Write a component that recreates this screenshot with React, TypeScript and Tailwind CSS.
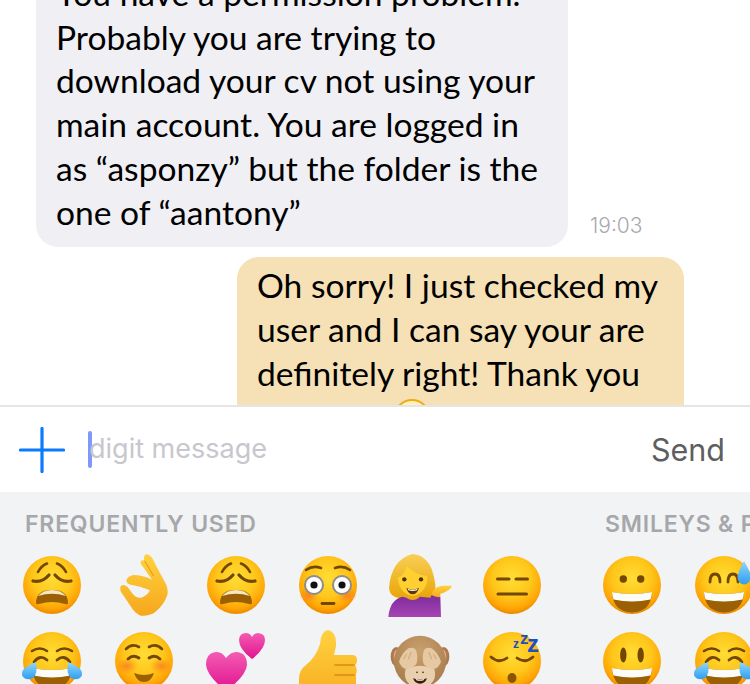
import React from 'react';

const BROWN = '#744700';

const Defs = () => (
  <svg className="absolute w-0 h-0" aria-hidden="true">
    <defs>
      <radialGradient id="face" cx="50%" cy="38%" r="62%">
        <stop offset="0%" stopColor="#ffdd35" />
        <stop offset="55%" stopColor="#ffc61a" />
        <stop offset="85%" stopColor="#ffa505" />
        <stop offset="100%" stopColor="#ea8900" />
      </radialGradient>
      <linearGradient id="skin" x1="0" y1="0" x2="0" y2="1">
        <stop offset="0%" stopColor="#ffd23f" />
        <stop offset="100%" stopColor="#f6a71c" />
      </linearGradient>
      <linearGradient id="pink" x1="0" y1="0" x2="0" y2="1">
        <stop offset="0%" stopColor="#f45bb3" />
        <stop offset="100%" stopColor="#e0138f" />
      </linearGradient>
      <linearGradient id="tear" x1="0" y1="0" x2="0" y2="1">
        <stop offset="0%" stopColor="#8fd8fb" />
        <stop offset="100%" stopColor="#2f9df0" />
      </linearGradient>
      <linearGradient id="hair" x1="0" y1="0" x2="0" y2="1">
        <stop offset="0%" stopColor="#f8cf55" />
        <stop offset="100%" stopColor="#e9a406" />
      </linearGradient>
      <linearGradient id="sweater" x1="0" y1="0" x2="0" y2="1">
        <stop offset="0%" stopColor="#7d2c99" />
        <stop offset="100%" stopColor="#a643b5" />
      </linearGradient>
      <radialGradient id="fur" cx="50%" cy="30%" r="70%">
        <stop offset="0%" stopColor="#c9a06d" />
        <stop offset="100%" stopColor="#a87c4c" />
      </radialGradient>
      <radialGradient id="blush" cx="50%" cy="50%" r="50%">
        <stop offset="0%" stopColor="#f9761f" stopOpacity="0.75" />
        <stop offset="100%" stopColor="#f9761f" stopOpacity="0" />
      </radialGradient>
    </defs>
  </svg>
);

const Icon = ({ children, vb = '0 0 64 64', size = 64 }: { children: React.ReactNode; vb?: string; size?: number }) => (
  <svg width={size} height={size} viewBox={vb} className="overflow-visible">
    {children}
  </svg>
);

const Head = () => <circle cx="32" cy="32" r="29" fill="url(#face)" />;

const Line = ({ d, w = 2.6, c = BROWN }: { d: string; w?: number; c?: string }) => (
  <path d={d} fill="none" stroke={c} strokeWidth={w} strokeLinecap="round" />
);

// wide open smile shared by most of the faces
const BigSmile = () => (
  <g>
    <path d="M12 39 Q32 43 52 39 Q51 59 32 59.5 Q13 59 12 39Z" fill="#9a6003" />
    <path d="M12 39 Q32 43 52 39 Q51.8 43 50.5 46.5 Q32 50.5 13.5 46.5 Q12.2 43 12 39Z" fill="#fbfbf8" />
  </g>
);

const TearDrop = ({ x, y, flip = false }: { x: number; y: number; flip?: boolean }) => (
  <g transform={`translate(${x} ${y}) scale(${flip ? -1 : 1} 1)`}>
    <path d="M7 -9 Q9 3 4 7 Q-2 10 -6 6 Q-9 1 -4 -3 Q2 -7 7 -9Z" fill="url(#tear)" />
  </g>
);

const Weary = () => (
  <Icon>
    <Head />
    <Line d="M18 19 Q21 13 27 10.5" />
    <Line d="M46 19 Q43 13 37 10.5" />
    <Line d="M13 28 Q22 30 29 22" w={3.2} />
    <Line d="M51 28 Q42 30 35 22" w={3.2} />
    <path d="M16 50 Q16 37 32 37 Q48 37 48 50 Q48 52 45 51 Q32 47 19 51 Q16 52 16 50Z" fill="#9a6003" />
    <path d="M18 43 Q23 37 32 37 Q41 37 46 43 Q32 38.5 18 43Z" fill="#f6e6c2" />
  </Icon>
);

const OkHand = () => (
  <Icon vb="36 24 192 192">
    <path
      d="M138 28 Q154 26 167 60 L195 112 Q206 130 202 150 Q192 180 165 202 Q148 214 122 212 Q104 205 92 184 L72 154 Q56 136 62 124 Q70 116 82 125 L98 146 Q108 160 124 158 Q142 152 150 136 Q128 126 100 121 Q80 118 79 108 Q80 95 100 90 Q128 90 156 104 L132 70 L122 56 Q120 46 130 46 L134 48 Q128 34 138 28Z"
      fill="url(#skin)"
    />
    <Line d="M134 48 L160 92" w={2.5} c="#d98a10" />
  </Icon>
);

const Flushed = () => (
  <Icon>
    <Head />
    <ellipse cx="13" cy="42" rx="10" ry="8" fill="url(#blush)" />
    <ellipse cx="51" cy="42" rx="10" ry="8" fill="url(#blush)" />
    <circle cx="18" cy="32" r="9" fill="#fff" stroke="#8d8d8d" strokeWidth="2" />
    <circle cx="46" cy="32" r="9" fill="#fff" stroke="#8d8d8d" strokeWidth="2" />
    <circle cx="18" cy="32" r="3.6" fill="#111" />
    <circle cx="46" cy="32" r="3.6" fill="#111" />
    <Line d="M10 17 Q17 12 25 15" />
    <Line d="M54 17 Q47 12 39 15" />
    <Line d="M26 50.5 L38 50.5" w={2.8} />
  </Icon>
);

const Person = () => (
  <Icon vb="39 24 192 192">
    <path d="M112 27 Q152 30 170 72 Q186 118 180 156 Q150 170 130 158 L76 160 Q44 158 42 130 Q48 45 112 27Z" fill="url(#hair)" />
    <path d="M40 216 Q44 165 82 155 L112 162 L136 155 L166 158 L170 150 L196 155 L198 216Z" fill="url(#sweater)" />
    <path d="M92 132 L134 132 L132 158 Q113 172 94 158Z" fill="#eba615" />
    <path d="M68 98 Q88 92 96 62 Q118 88 157 94 Q160 120 140 140 Q113 164 86 140 Q70 124 68 98Z" fill="#ffd02f" />
    <circle cx="88" cy="103" r="6.5" fill="#4d3210" />
    <circle cx="138" cy="103" r="6.5" fill="#4d3210" />
    <path d="M94 129 Q113 137 132 129 Q126 148 113 148 Q100 148 94 129Z" fill="#5f3608" />
    <path d="M98 131 Q113 136 128 131 L126 136 Q113 140 100 136Z" fill="#fff" />
    <path d="M170 150 Q172 128 200 122 L231 122 Q226 138 196 146 L196 156 Q182 158 170 150Z" fill="url(#skin)" />
  </Icon>
);

const Expressionless = () => (
  <Icon>
    <Head />
    <Line d="M17.5 26 L29 26" w={3} />
    <Line d="M36 26 L47.5 26" w={3} />
    <Line d="M18 41 L46.5 41" w={3} />
  </Icon>
);

const Grinning = () => (
  <Icon>
    <Head />
    <circle cx="23.3" cy="26" r="3.7" fill={BROWN} />
    <circle cx="40.7" cy="26" r="3.7" fill={BROWN} />
    <BigSmile />
  </Icon>
);

const SweatSmile = () => (
  <Icon>
    <Head />
    <Line d="M18 29 Q18 21 23 21 Q28 21 28 29" w={2.8} />
    <Line d="M36 29 Q36 21 41 21 Q46 21 46 29" w={2.8} />
    <BigSmile />
    <path d="M52 8 Q59 20 58.5 24 Q58 31 52 31.5 Q46 31 45.5 24 Q45.5 20 52 8Z" fill="url(#tear)" />
  </Icon>
);

const Joy = () => (
  <Icon>
    <Head />
    <Line d="M12 22 Q20 17 27 22" />
    <Line d="M52 22 Q44 17 37 22" />
    <Line d="M14 33 Q20 25 27 31" w={2.8} />
    <Line d="M50 33 Q44 25 37 31" w={2.8} />
    <BigSmile />
    <TearDrop x={9} y={42} />
    <TearDrop x={55} y={42} flip />
  </Icon>
);

const Relaxed = () => (
  <Icon>
    <Head />
    <ellipse cx="15" cy="37" rx="11" ry="8" fill="url(#blush)" />
    <ellipse cx="49" cy="37" rx="11" ry="8" fill="url(#blush)" />
    <Line d="M14 20 Q20 14 27 18" />
    <Line d="M50 20 Q44 14 37 18" />
    <Line d="M16 30 Q21 25 27 29" w={2.8} />
    <Line d="M48 30 Q43 25 37 29" w={2.8} />
    <path d="M22 44 Q32 48 42 44 Q39 53 32 53 Q25 53 22 44Z" fill="#9a6003" />
  </Icon>
);

const Hearts = () => (
  <Icon>
    <path d="M22 62 Q3 47 2 36 Q2 24 12 23 Q18 22.5 22 29 Q27 22.5 33 23 Q43 24 43 36 Q42 47 22 62Z" fill="url(#pink)" />
    <path d="M48 30 Q35 20 35 11 Q35.5 4 42 4 Q46 4 48 8 Q50.5 4 54 4 Q61 4.5 61 11 Q61 20 48 30Z" fill="url(#pink)" />
  </Icon>
);

const ThumbsUp = () => (
  <Icon>
    <path d="M3 50 Q3 41 10 36 Q20 28 24 15 Q25 2 32 1 Q41 3 40 17 L38 26 L56 26 Q61 26 61 31 Q61 35 59 36 Q62 40 60 45 L60 80 L3 80Z" fill="url(#skin)" />
    <Line d="M39 36 L58 36" w={1.6} c="#d98a10" />
    <Line d="M39 46 L58 46" w={1.6} c="#d98a10" />
    <Line d="M39 56 L58 56" w={1.6} c="#d98a10" />
  </Icon>
);

const Monkey = () => (
  <Icon vb="39 252 192 192">
    <ellipse cx="64" cy="335" rx="17" ry="29" fill="#a87c4c" />
    <ellipse cx="206" cy="335" rx="17" ry="29" fill="#a87c4c" />
    <ellipse cx="66" cy="335" rx="10" ry="21" fill="#eba6a0" />
    <ellipse cx="204" cy="335" rx="10" ry="21" fill="#eba6a0" />
    <circle cx="135" cy="350" r="78" fill="url(#fur)" />
    <path d="M92 372 Q135 352 178 372 Q190 420 135 430 Q80 420 92 372Z" fill="#e8cfae" />
    <path d="M114 400 Q135 407 156 400 Q150 416 135 416 Q120 416 114 400Z" fill="#3a1a0a" />
    <path d="M122 402 Q135 406 148 402 L146 406 Q135 409 124 406Z" fill="#fff" />
    <ellipse cx="126" cy="382" rx="3" ry="2.5" fill="#5b3a1c" />
    <ellipse cx="144" cy="382" rx="3" ry="2.5" fill="#5b3a1c" />
    <path d="M72 350 Q80 325 100 310 Q118 304 124 318 Q130 340 124 358 Q108 372 94 372 Q78 368 72 350Z" fill="#e6c8a3" />
    <path d="M198 350 Q190 325 170 310 Q152 304 146 318 Q140 340 146 358 Q162 372 176 372 Q192 368 198 350Z" fill="#e6c8a3" />
    <Line d="M94 328 L86 342" w={2} c="#b99465" />
    <Line d="M108 322 L100 342" w={2} c="#b99465" />
    <Line d="M176 328 L184 342" w={2} c="#b99465" />
    <Line d="M162 322 L170 342" w={2} c="#b99465" />
  </Icon>
);

const Sleeping = () => (
  <Icon>
    <Head />
    <Line d="M11 28 Q19 35 27 29" w={2.8} />
    <Line d="M53 28 Q45 35 37 29" w={2.8} />
    <ellipse cx="32" cy="49" rx="4.5" ry="5" fill="#8a5503" />
    <g fill="#1c4fc4" fontFamily='"Liberation Sans", sans-serif' fontWeight="700">
      <text x="33" y="19" fontSize="12">z</text>
      <text x="40" y="15" fontSize="17">z</text>
      <text x="47" y="23" fontSize="24">z</text>
    </g>
  </Icon>
);

const Smiley = () => (
  <Icon>
    <Head />
    <ellipse cx="23.3" cy="26" rx="3.2" ry="7.5" fill={BROWN} />
    <ellipse cx="40.7" cy="26" rx="3.2" ry="7.5" fill={BROWN} />
    <BigSmile />
  </Icon>
);

const Cell = ({ children }: { children: React.ReactNode }) => (
  <div className="w-[92px] h-[76px] flex items-center justify-center">{children}</div>
);

const Section = ({ title, items }: { title: string; items: React.ReactNode[] }) => (
  <div className="shrink-0">
    <div className="pl-[19px] h-[55px] pt-[18px] text-[23px] leading-[28px] font-semibold tracking-[0.8px] text-[#a6a7aa] whitespace-nowrap font-['Inter',sans-serif]">
      {title}
    </div>
    <div className="grid grid-rows-[76px_76px] grid-flow-col auto-cols-[92px] justify-start">
      {items.map((item, i) => (
        <Cell key={i}>{item}</Cell>
      ))}
    </div>
  </div>
);

export default function App() {
  return (
    <div className="w-[750px] h-[684px] overflow-hidden flex flex-col bg-white font-['Lato',sans-serif] relative">
      <Defs />

      {/* Messages */}
      <div className="h-[405px] shrink-0 overflow-hidden">
        <div className="-mt-[35px] flex flex-col gap-[10px] text-black text-[33.6px] leading-[43.7px]">
          <div className="flex items-end pl-[36px]">
            <div className="w-[532px] bg-[#efeff4] rounded-[22px] pl-[20px] pt-[7px] pb-[13px] whitespace-nowrap">
              You have a permission problem.<br />
              Probably you are trying to<br />
              download your cv not using your<br />
              main account. You are logged in<br />
              as “asponzy” but the folder is the<br />
              one of “aantony”
            </div>
            <span className="ml-[22px] mb-[7px] text-[21px] leading-[28px] font-light text-[#a9a9ad] font-['Inter',sans-serif]">19:03</span>
          </div>
          <div className="ml-[237px] w-[447px] bg-[#f5e1b5] rounded-[22px] pl-[20px] pt-[7px] pb-[13px] whitespace-nowrap">
            Oh sorry! I just checked my<br />
            user and I can say your are<br />
            definitely right! Thank you<br />
            so much
            <svg width="36" height="36" viewBox="0 0 36 36" className="inline-block align-[-6px] ml-[14px]">
              <circle cx="18" cy="18" r="17" fill="#fff4b8" stroke="#f4a81d" strokeWidth="2" />
            </svg>
          </div>
        </div>
      </div>

      {/* Input bar */}
      <div className="h-[87px] shrink-0 border-t-2 border-[#e5e5e7] flex items-center bg-white">
        <svg width="46" height="46" viewBox="0 0 46 46" className="ml-[19px] shrink-0">
          <path d="M1.5 23 H44.5 M23 1.5 V44.5" stroke="#0a7aff" strokeWidth="3.2" strokeLinecap="round" fill="none" />
        </svg>
        <div className="ml-[23px] w-[4px] h-[37px] rounded-full bg-[#8098f9] shrink-0" />
        <span className="-ml-[3px] flex-1 text-[27px] text-[#c7c7cd] font-['Inter',sans-serif]">digit message</span>
        <span className="mr-[25px] text-[30.5px] text-[#5d5e60] font-['Inter',sans-serif]">Send</span>
      </div>

      {/* Emoji keyboard */}
      <div className="flex-1 bg-[#f2f3f5] pl-[6px] flex gap-[28px] overflow-hidden">
        <Section
          title="FREQUENTLY USED"
          items={[
            <Weary />, <Joy />, <OkHand />, <Relaxed />, <Weary />, <Hearts />,
            <Flushed />, <ThumbsUp />, <Person />, <Monkey />, <Expressionless />, <Sleeping />,
          ]}
        />
        <Section
          title="SMILEYS & PEOPLE"
          items={[<Grinning />, <Smiley />, <SweatSmile />, <Joy />]}
        />
      </div>
    </div>
  );
}
